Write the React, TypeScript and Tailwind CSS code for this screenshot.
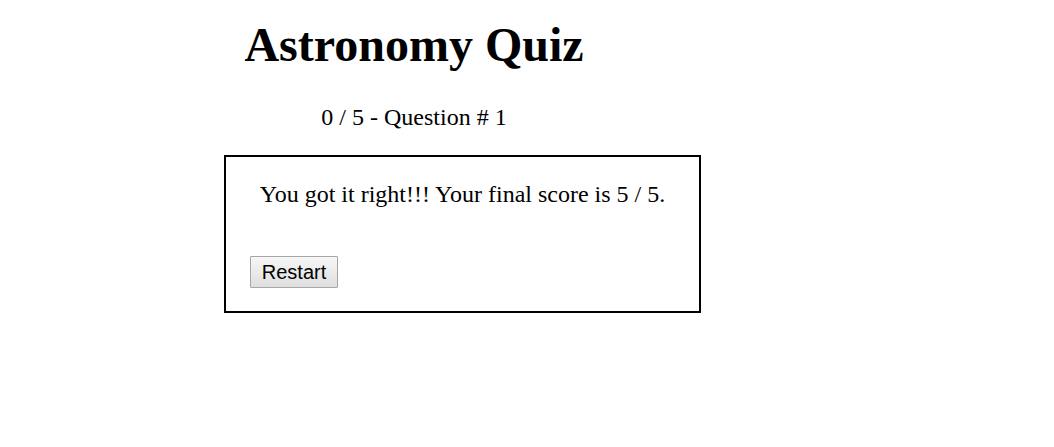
const App = () => {
    return (
        <div className="min-h-[447px] bg-white text-black font-['Liberation_Serif',serif]">
            <div className="w-[500px] ml-[164px] pt-[17px] text-center">
                <h1 className="text-[48px] leading-[56px] font-bold">
                    Astronomy Quiz
                </h1>
                <div className="mt-[30px] text-[24px] leading-[28px]">
                    0 / 5 - Question # 1
                </div>
            </div>
            <div className="mt-[24px] ml-[224px] w-[477px] border-2 border-black">
                <p className="mt-[23px] text-center text-[24px] leading-[28px]">
                    You got it right!!! Your final score is 5 / 5.
                </p>
                <div className="mt-[48px] mb-[23px] px-[24px]">
                    <button className="h-[32px] w-[88px] border border-[#a6a6a6] rounded-[1px] bg-linear-to-b from-[#f7f7f7] to-[#dedede] font-['Liberation_Sans',Arial,sans-serif] text-[20px] leading-none text-black">
                        Restart
                    </button>
                </div>
            </div>
        </div>
    );
}

export default App;
